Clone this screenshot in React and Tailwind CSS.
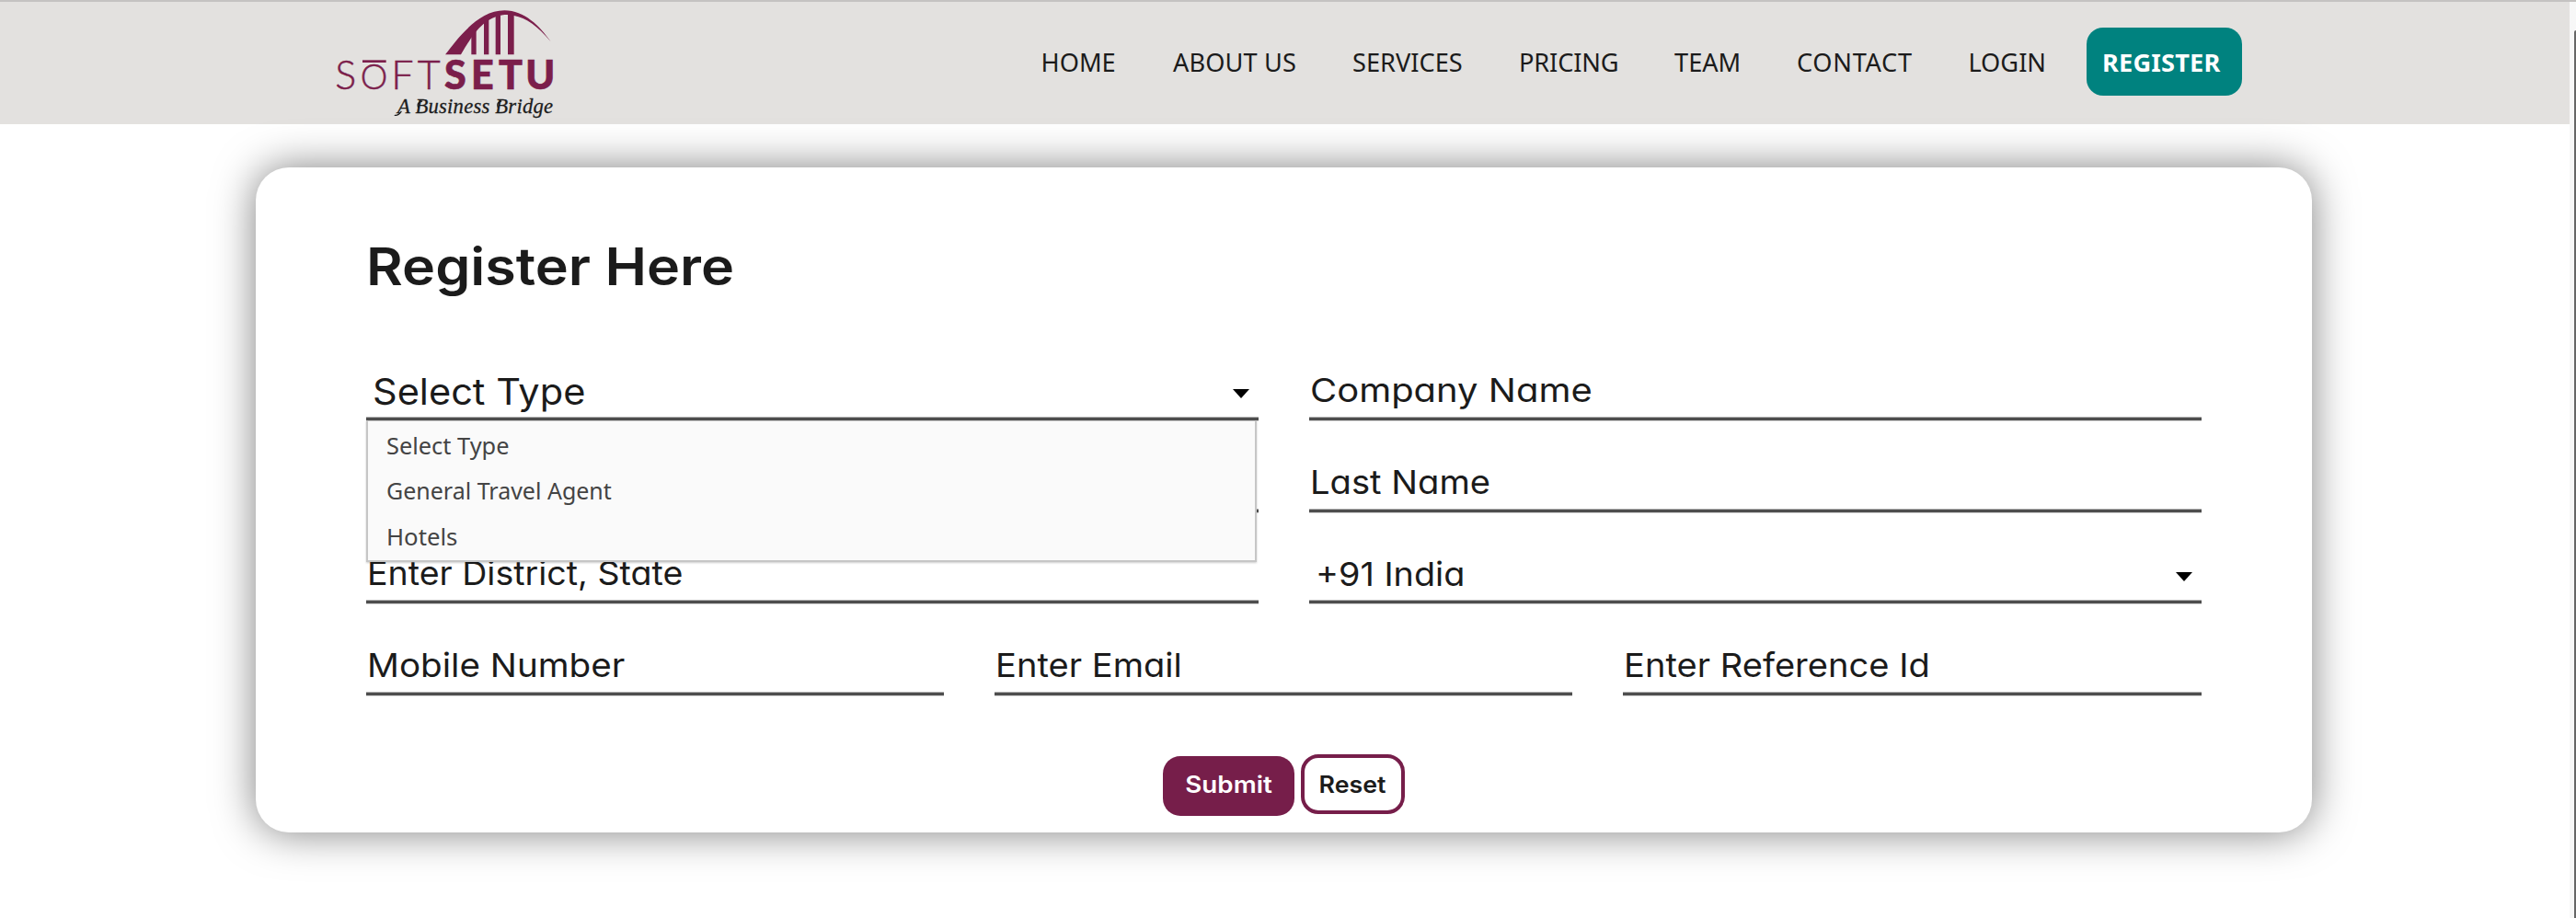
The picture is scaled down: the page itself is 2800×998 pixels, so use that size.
const NAV = [
  ["HOME", "w-[143.5px]"],
  ["ABOUT US", "w-[195px] tracking-[0.1px]"],
  ["SERVICES", "w-[181px]"],
  ["PRICING", "w-[169px] tracking-[-0.15px]"],
  ["TEAM", "w-[133px]"],
  ["CONTACT", "w-[186.4px] tracking-[0.7px]"],
  ["LOGIN", "w-[128.1px]"],
];

const OPTIONS = [
  ["Select Type", "scale-x-[1.015]"],
  ["General Travel Agent", ""],
  ["Hotels", "scale-x-[1.03]"],
];

function Logo() {
  return (
    <svg className="h-[134px] w-[300px]" viewBox="0 0 900 402" fill="#7b1e4b">
      <path d="M432 178C475 122 540 34 625 34C690 34 740 85 776 136C735 86 695 58 656 51C645 48 632 47 620 49C560 58 525 105 483 178Z" />
      <path d="M517 118L533 95V178H517ZM558 72L574 60V178H558ZM596 50H612V178H596ZM636 44H656V178H636Z" />
      <g fontFamily="Lato, sans-serif" fontWeight="300" fontSize="129" stroke="#7b1e4b" strokeWidth="1.5">
        <text x="73" y="290">S</text>
        <text x="155" y="290" fontSize="112">O</text>
        <text x="256" y="290">F</text>
        <text x="341" y="290">T</text>
        <text x="429 516 606 694" y="290" fontWeight="900" strokeWidth="2">SETU</text>
      </g>
      <path d="M162 196H239V204H162Z" />
      <text x="276" y="368" fill="#1c1c1c" stroke="#1c1c1c" strokeWidth="0.8" fontFamily="'Liberation Serif', serif" fontStyle="italic" fontSize="68" textLength="507">A Business Bridge</text>
      <path d="M288 364Q278 378 268 376M356 330Q338 334 344 350M614 330Q598 334 604 350" fill="none" stroke="#1c1c1c" strokeWidth="4" strokeLinecap="round" />
    </svg>
  );
}

function Arrow() {
  return (
    <svg className="h-[10px] w-[18px]" viewBox="0 0 18 10" fill="#000">
      <path d="M0 0H18L9 10Z" />
    </svg>
  );
}

function Field({ label, pad = "pl-px pb-1.5", scale = "", select, className = "", children }) {
  return (
    <div className={`relative flex h-[99.5px] flex-1 items-end justify-between border-b-[3px] border-[#4e4e4e] shadow-[0_1px_0_#d0d0d0,inset_0_-1px_0_#b4b4b4] ${className}`}>
      <div className={pad}>
        <span className={`block w-fit origin-left whitespace-pre leading-[48px] ${scale}`}>{label}</span>
      </div>
      {select && (
        <div className="pb-[21px] pr-[10px]">
          <Arrow />
        </div>
      )}
      {children}
    </div>
  );
}

function Dropdown() {
  return (
    <ul className="absolute left-0 top-full z-10 mt-[3px] h-[154px] w-[968px] border-2 border-t border-[#c6c6c6] bg-[#fafafa] pl-[20px] pt-[1.5px] font-['Noto_Sans',sans-serif] text-[25px] text-[#444] shadow-[0_1px_2px_rgba(0,0,0,0.2)]">
      {OPTIONS.map(([o, s]) => (
        <li key={o} className={`h-[49.7px] w-fit origin-left leading-[49.7px] ${s}`}>{o}</li>
      ))}
    </ul>
  );
}

export default function App() {
  return (
    <div className="flex h-[998px] w-[2800px] overflow-hidden border-t-2 border-[#c4c2c1] bg-white font-['Inter',sans-serif] text-[#1b1b1b] [font-feature-settings:'cv11']">
      <div className="w-[2793px]">
        <header className="flex h-[132.5px] items-start justify-between bg-[#e3e1df] pl-[340px] pr-[356px]">
          <div className="-mt-0.5">
            <Logo />
          </div>
          <nav className="flex h-full items-center pb-[3px] font-['Noto_Sans',sans-serif] text-[27.2px]">
            {NAV.map(([n, c]) => (
              <span key={n} className={`whitespace-nowrap pt-[3px] ${c}`}>{n}</span>
            ))}
            <span className="flex h-[74px] w-[169.5px] items-center justify-center rounded-[18px] bg-[#00827f] pr-1.5 pt-[3px] font-bold tracking-[0.2px] text-white">REGISTER</span>
          </nav>
        </header>
        <main className="ml-[278px] mt-[47.5px] h-[723px] w-[2235px] rounded-[36px] bg-white pl-[120px] pr-[120.5px] pt-[72px] shadow-[0_0_45px_rgba(0,0,0,0.5)]">
          <h1 className="mb-[31.5px] w-fit origin-left scale-x-[1.09] text-[56px] font-semibold leading-[72px]">Register Here</h1>
          <div className="text-[36px]">
            <div className="relative z-10 flex gap-[55px]">
              <Field label="Select Type" select className="text-[39px]" pad="pl-[7px] pb-1" scale="scale-x-[1.065]">
                <Dropdown />
              </Field>
              <Field label="Company Name" scale="scale-x-[1.11]" />
            </div>
            <div className="flex gap-[55px]">
              <Field label="" />
              <Field label="Last Name" scale="scale-x-[1.06]" />
            </div>
            <div className="flex gap-[55px]">
              <Field label="Enter District, State" scale="scale-x-[1.043]" />
              <Field label="+91 India" select pad="pl-[7px] pb-[5px]" scale="scale-x-[1.05]" />
            </div>
            <div className="flex gap-[55px]">
              <Field label="Mobile Number" scale="scale-x-[1.073]" />
              <Field label="Enter Email" scale="scale-x-[1.058]" />
              <Field label="Enter Reference Id" scale="scale-x-[1.058]" />
            </div>
          </div>
          <div className="flex justify-center gap-[7px] pt-[64.5px] text-[25px] font-semibold">
            <button className="mt-0.5 flex h-[65px] w-[142.5px] items-center justify-center rounded-[19px] bg-[#761e4a] pb-[2px] text-white">
              <span className="scale-x-[1.11]">Submit</span>
            </button>
            <button className="flex h-[65px] w-[113px] items-center justify-center rounded-[19px] border-4 border-[#761e4a] pt-[2px]">
              <span className="scale-x-[1.07]">Reset</span>
            </button>
          </div>
        </main>
      </div>
      <div className="flex flex-1 justify-end bg-[#f7f7f7] pt-[31px]">
        <div className="w-[2px] rounded-tl-sm bg-[#666]" />
      </div>
    </div>
  );
}
